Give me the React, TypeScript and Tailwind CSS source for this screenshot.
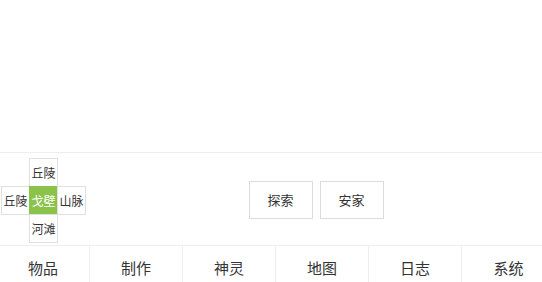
import React from 'react'

const tabs = ['物品', '制作', '神灵', '地图', '日志', '系统']

function Cell({ label, active }: { label?: string; active?: boolean }) {
  if (!label) return <div />
  return (
    <div
      className={`flex h-[29px] w-[29px] items-center justify-center border text-[12px] ${
        active
          ? 'border-[#8bc34a] bg-[#8bc34a] text-white'
          : 'border-[#e0e0e0] bg-white text-[#333]'
      }`}
    >
      {label}
    </div>
  )
}

export default function App() {
  return (
    <div
      className="flex h-[290px] w-[542px] flex-col overflow-hidden bg-white"
      style={{ fontFamily: '"Noto Sans CJK SC", "Noto Sans", sans-serif' }}
    >
      <div className="h-[153px] shrink-0 border-b border-[#eeeeee]" />

      <div className="flex h-[92px] shrink-0">
        <div className="w-[90px] shrink-0 pl-px pt-[5px]">
          <div className="grid grid-cols-[28px_28px_28px] grid-rows-[28px_28px_28px]">
            <Cell />
            <Cell label="丘陵" />
            <Cell />
            <Cell label="丘陵" />
            <Cell label="戈壁" active />
            <Cell label="山脉" />
            <Cell />
            <Cell label="河滩" />
            <Cell />
          </div>
        </div>
        <div className="flex flex-1 items-center justify-center gap-[7px] pt-[2px]">
          <button className="h-[38px] w-[64px] border border-[#dddddd] bg-white text-[13px] text-[#333]">
            探索
          </button>
          <button className="h-[38px] w-[64px] border border-[#dddddd] bg-white text-[13px] text-[#333]">
            安家
          </button>
        </div>
      </div>

      <div className="flex h-[45px] shrink-0 border-t border-[#eeeeee]">
        <div className="-ml-[3px] flex">
          {tabs.map((t, i) => (
            <div
              key={t}
              className={`flex h-[44px] w-[93px] shrink-0 items-center justify-center text-[15px] text-[#333] ${
                i < tabs.length - 1 ? 'border-r border-[#eeeeee]' : ''
              }`}
            >
              {t}
            </div>
          ))}
        </div>
      </div>
    </div>
  )
}
